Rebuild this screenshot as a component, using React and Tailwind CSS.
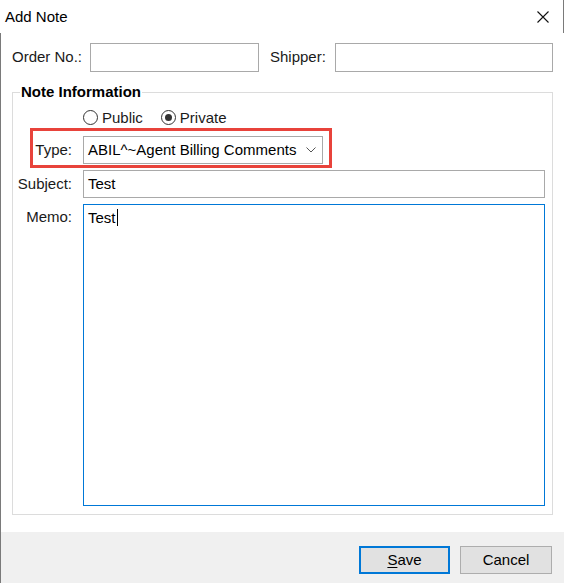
import React from "react";

const Radio = ({ label, checked }) => (
  <div className="flex items-center">
    <span className="flex h-[15px] w-[15px] items-center justify-center rounded-full border border-[#333333] bg-white">
      {checked && <span className="h-[7px] w-[7px] rounded-full bg-[#333333]" />}
    </span>
    <span className="ml-[4px] leading-none">{label}</span>
  </div>
);

const App = () => {
  return (
    <div className="flex h-[583px] w-[564px] flex-col bg-white font-['Liberation_Sans',Arial,sans-serif] text-[15px] text-[#1a1a1a]">
      {/* Title bar */}
      <div className="flex h-[33px] items-center justify-between border-r border-[#7a7a7a] pl-[5px] pr-[14px]">
        <span className="pt-[1px] text-[15px] text-black">Add Note</span>
        <svg width="12" height="12" viewBox="0 0 12 12">
          <path d="M0.5 0.5 L11.5 11.5 M11.5 0.5 L0.5 11.5" stroke="#111" strokeWidth="1.1" />
        </svg>
      </div>

      <div className="flex flex-1 flex-col border-l border-[#7a7a7a]">
        {/* Order / Shipper */}
        <div className="flex items-center pl-[11px] pt-[10px]">
          <span className="w-[78px]">Order No.:</span>
          <div className="h-[29px] w-[169px] border border-[#a9a9a9]" />
          <span className="ml-[11px] w-[65px]">Shipper:</span>
          <div className="h-[29px] w-[218px] border border-[#a9a9a9]" />
        </div>

        {/* Note Information group */}
        <div className="relative ml-[11px] mt-[20px] h-[423px] w-[541px] border border-[#dcdcdc]">
          <span className="absolute left-[7px] top-[-10px] bg-white px-[1px] font-bold leading-[18px] text-black">
            Note Information
          </span>

          <div className="flex flex-col pt-[15px]">
            <div className="flex h-[18px] items-center pl-[70px]">
              <Radio label="Public" />
              <div className="ml-[18px]">
                <Radio label="Private" checked />
              </div>
            </div>

            <div className="mt-[10px] flex items-center">
              <span className="w-[60px] pr-[1px] text-right">Type:</span>
              <div className="ml-[10px] flex h-[28px] w-[240px] items-center justify-between border border-[#a9a9a9] pl-[4px] pr-[6px]">
                <span className="text-black">ABIL^~Agent Billing Comments</span>
                <svg width="10" height="6" viewBox="0 0 10 6">
                  <path d="M0.5 0.5 L5 5 L9.5 0.5" fill="none" stroke="#555" strokeWidth="1" />
                </svg>
              </div>
            </div>

            <div className="mt-[6px] flex items-center">
              <span className="w-[60px] pr-[1px] text-right">Subject:</span>
              <div className="ml-[10px] flex h-[28px] w-[462px] items-center border border-[#a9a9a9] pl-[4px] text-black">
                Test
              </div>
            </div>

            <div className="mt-[6px] flex items-start">
              <span className="w-[60px] pr-[1px] pt-[4px] text-right leading-[17px]">Memo:</span>
              <div className="ml-[10px] h-[302px] w-[462px] border border-[#0078d7] pl-[4px] pt-[4px] leading-[17px] text-black">
                <span>Test</span>
                <span className="ml-[1px] inline-block h-[17px] w-[1px] bg-black align-top" />
              </div>
            </div>
          </div>

          {/* annotation */}
          <div className="absolute left-[17px] top-[35px] h-[40px] w-[302px] border-[3px] border-[#e8433b]" />
        </div>

        <div className="flex-1" />

        {/* Footer */}
        <div className="flex h-[51px] items-start justify-end bg-[#f0f0f0] pr-[12px] pt-[14px]">
          <button className="h-[28px] w-[91px] border-2 border-[#0078d7] bg-[#e1e1e1] text-black">
            <span className="underline underline-offset-2">S</span>ave
          </button>
          <button className="ml-[10px] h-[28px] w-[92px] border border-[#adadad] bg-[#e1e1e1] text-black">
            Cancel
          </button>
        </div>
      </div>
    </div>
  );
};

export default App;
